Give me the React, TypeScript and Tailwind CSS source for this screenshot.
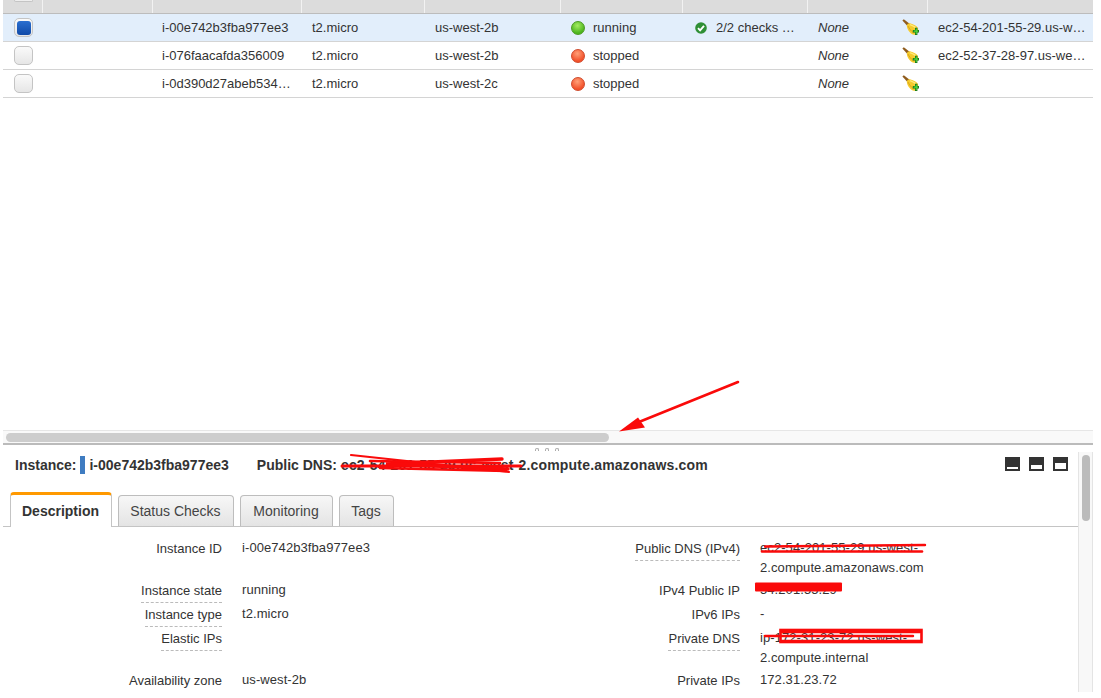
import React from "react";

const columns = ["w-[40px]", "w-[110px]", "w-[149px]", "w-[123px]", "w-[136px]", "w-[122px]", "w-[125px]", "w-[120px]", "flex-1"];

function Checkbox({ on }: { on?: boolean }) {
  return (
    <div className="flex h-[19px] w-[19px] items-center justify-center rounded-[5px] border border-[#c4c4c4] bg-gradient-to-b from-[#fafafa] to-[#e6e6e6]">
      {on && <div className="h-[14px] w-[14px] rounded-[3px] bg-gradient-to-b from-[#2a6fd0] to-[#104aa8]" />}
    </div>
  );
}

function Broom() {
  return (
    <svg width="17" height="18" viewBox="0 0 17 18" className="block">
      <path d="M0.4 1.6 L1.8 0.2 L7.6 4.8 L5.4 7 Z" fill="#8f5c1e" />
      <path d="M4.8 6.4 C5.4 4.6 7 3.8 8.6 4.4 C11.4 5.2 15 6.8 16 9 C16.6 11.4 15.6 14 13.6 15.4 C11.4 16.2 9.4 15.2 7.8 13.2 C6 11.2 4.8 8.8 4.8 6.4 Z" fill="#f6cb2c" />
      <path d="M6 7 C7.2 9.6 9 12 11.4 13.8" stroke="#d9a41c" strokeWidth="1" fill="none" />
      <path d="M8 5.6 C10 6.4 12 7.4 13.8 8.6" stroke="#ffe97a" strokeWidth="1.5" fill="none" />
      <path d="M10.8 11 H13 V8.8 H15.4 V11 H17 V13.4 H15.4 V16 H13 V13.4 H10.8 Z" fill="#146f18" />
      <path d="M13.7 9.6 H14.8 V11.6 H16.2 V12.8 H14.8 V15.2 H13.7 V12.8 H11.6 V11.6 H13.7 Z" fill="#52dc3e" />
    </svg>
  );
}

function StateDot({ running }: { running: boolean }) {
  return (
    <span
      className={
        running
          ? "h-[14px] w-[14px] rounded-full border border-[#4c9a22] bg-[radial-gradient(circle_at_45%_30%,#a4ec62,#4cb51e_70%)]"
          : "h-[14px] w-[14px] rounded-full border border-[#cf4a2c] bg-[radial-gradient(circle_at_45%_30%,#ffa078,#f2502a_70%)]"
      }
    />
  );
}

function CheckBadge() {
  return (
    <svg width="12" height="12" viewBox="0 0 12 12" className="block">
      <circle cx="6" cy="6" r="5.8" fill="#2f8f35" />
      <path d="M3 6.2 L5.1 8.3 L9 3.9" stroke="#fff" strokeWidth="1.9" fill="none" />
    </svg>
  );
}

type RowData = { id: string; zone: string; running: boolean; checks?: string; dns?: string; selected?: boolean };

const rows: RowData[] = [
  { id: "i-00e742b3fba977ee3", zone: "us-west-2b", running: true, checks: "2/2 checks …", dns: "ec2-54-201-55-29.us-w…", selected: true },
  { id: "i-076faacafda356009", zone: "us-west-2b", running: false, dns: "ec2-52-37-28-97.us-we…" },
  { id: "i-0d390d27abeb534…", zone: "us-west-2c", running: false },
];

function TableRow({ r }: { r: RowData }) {
  return (
    <div className={`flex h-[28px] items-center border-b border-[#d4d4d4] text-[13px] text-[#333] ${r.selected ? "bg-[#e2eefb]" : "bg-white"}`}>
      <div className={`${columns[0]} pl-[11px]`}><Checkbox on={r.selected} /></div>
      <div className={columns[1]} />
      <div className={`${columns[2]} pl-[9px]`}>{r.id}</div>
      <div className={`${columns[3]} pl-[10px]`}>t2.micro</div>
      <div className={`${columns[4]} pl-[10px]`}>{r.zone}</div>
      <div className={`${columns[5]} flex items-center gap-[8px] pl-[10px]`}>
        <StateDot running={r.running} />
        <span>{r.running ? "running" : "stopped"}</span>
      </div>
      <div className={`${columns[6]} flex items-center gap-[9px] pl-[12px]`}>
        {r.checks && <CheckBadge />}
        {r.checks && <span>{r.checks}</span>}
      </div>
      <div className={`${columns[7]} flex items-center pl-[10px]`}>
        <span className="w-[84px] italic">None</span>
        <Broom />
      </div>
      <div className={`${columns[8]} pl-[10px] whitespace-nowrap`}>{r.dns}</div>
    </div>
  );
}

function Label({ children, dashed }: { children: React.ReactNode; dashed?: boolean }) {
  return (
    <div className="flex w-[219px] justify-end">
      <span className={`leading-[20px] ${dashed ? "h-[22px] border-b border-dashed border-[#bbb]" : ""}`}>{children}</span>
    </div>
  );
}

function Field({ label, dashed, tall, children }: { label: string; dashed?: boolean; tall?: boolean; children?: React.ReactNode }) {
  return (
    <div className={`flex shrink-0 ${tall ? "h-[42px]" : "h-[24px]"}`}>
      <Label dashed={dashed}>{label}</Label>
      <div className="ml-[20px] -mt-px leading-[20px] tracking-[0.08px]">{children}</div>
    </div>
  );
}

function LayoutIcon({ kind }: { kind: "bottom" | "middle" | "full" }) {
  const inner =
    kind === "bottom"
      ? "mt-[10px] h-[2px] w-[11px]"
      : kind === "middle"
        ? "mt-[8px] h-[4px] w-[11px]"
        : "mt-[6px] h-[6px] w-[11px]";
  return (
    <div className="flex h-[14px] w-[15px] justify-center bg-[#333]">
      <div className={`${inner} bg-white`} />
    </div>
  );
}

function Tab({ children, w }: { children: React.ReactNode; w: string }) {
  return (
    <div className={`${w} flex h-[31px] items-center justify-center rounded-t-[4px] border border-b-0 border-[#bdbdbd] bg-gradient-to-b from-[#f7f7f7] to-[#e4e4e4] text-[14px] text-[#444]`}>
      {children}
    </div>
  );
}

export default function App() {
  return (
    <div className="relative h-[698px] w-[1101px] overflow-hidden bg-white font-['Liberation_Sans',Arial,sans-serif] text-[13px] text-[#333]">
      <div className="flex h-[692px] w-[1093px] flex-col">
        <div className="pl-[3px]">
          {/* header remnant */}
          <div className="flex h-[14px] border-b border-[#bcbcbc] bg-[#dcdcdc]">
            <div className="relative w-[40px] border-r border-[#f2f2f2]">
              <div className="absolute left-[11px] top-0 h-[2px] w-[19px] rounded-b-[3px] border border-t-0 border-[#c4c4c4] bg-[#eee]" />
            </div>
            <div className="w-[110px] border-r border-[#f2f2f2]" />
            <div className="w-[149px] border-r border-[#f2f2f2]" />
            <div className="w-[123px] border-r border-[#f2f2f2]" />
            <div className="w-[136px] border-r border-[#f2f2f2]" />
            <div className="w-[122px] border-r border-[#f2f2f2]" />
            <div className="w-[125px] border-r border-[#f2f2f2]" />
            <div className="w-[120px] border-r border-[#f2f2f2]" />
          </div>
          {rows.map((r) => (
            <TableRow key={r.id} r={r} />
          ))}
        </div>

        <div className="flex-1" />

        {/* horizontal scrollbar */}
        <div className="ml-[3px] h-[15px] border-t border-b-2 border-t-[#e6e6e6] border-b-[#bbb] bg-[#f9f9f9] pl-[3px] pt-[2px]">
          <div className="h-[9px] w-[603px] rounded-full bg-[#cdcdcd]" />
        </div>

        {/* detail pane */}
        <div className="ml-[3px] flex h-[247px] flex-col overflow-hidden">
          <div className="flex h-[7px] justify-center gap-[6px] pr-[2px] pt-[3px]">
            <span className="h-[3px] w-[4px] rounded-t-full border border-b-0 border-[#aaa]" />
            <span className="h-[3px] w-[4px] rounded-t-full border border-b-0 border-[#aaa]" />
            <span className="h-[3px] w-[4px] rounded-t-full border border-b-0 border-[#aaa]" />
          </div>
          <div className="flex min-h-0 flex-1">
            <div className="flex w-[1075px] flex-col">
              {/* heading */}
              <div className="flex h-[40px] shrink-0 items-start pl-[12px] pr-[10px] pt-[4px]">
                <div className="flex h-[18px] items-center text-[14px] font-bold leading-[18px] text-[#333]">
                  <span>Instance:</span>
                  <span className="ml-[4px] h-[18px] w-[5px] bg-[#3f7cc1]" />
                  <span className="ml-[4px]">i-00e742b3fba977ee3</span>
                  <span className="ml-[28px]">Public DNS:</span>
                  <span className="ml-[4px] tracking-[0.19px]">ec2-54-201-55-29.us-west-2.compute.amazonaws.com</span>
                </div>
                <div className="ml-auto mt-[1px] flex gap-[9px]">
                  <LayoutIcon kind="bottom" />
                  <LayoutIcon kind="middle" />
                  <LayoutIcon kind="full" />
                </div>
              </div>
              {/* tabs */}
              <div className="flex h-[35px] shrink-0 items-end gap-[6px] border-b border-[#c4c4c4] pl-[6.5px]">
                <div className="-mb-px flex h-[35px] w-[102px] items-center justify-center rounded-t-[4px] border border-b-0 border-t-[3px] border-[#c4c4c4] border-t-[#f90] bg-white text-[14px] font-bold text-[#333]">
                  Description
                </div>
                <Tab w="w-[116px]">Status Checks</Tab>
                <Tab w="w-[93px]">Monitoring</Tab>
                <Tab w="w-[55px]">Tags</Tab>
              </div>
              {/* fields */}
              <div className="flex pt-[12px]">
                <div className="flex w-[518px] flex-col">
                  <Field label="Instance ID" tall>i-00e742b3fba977ee3</Field>
                  <Field label="Instance state" dashed>running</Field>
                  <Field label="Instance type" dashed>t2.micro</Field>
                  <Field label="Elastic IPs" dashed tall />
                  <Field label="Availability zone" dashed>us-west-2b</Field>
                </div>
                <div className="flex flex-1 flex-col">
                  <Field label="Public DNS (IPv4)" dashed tall>
                    ec2-54-201-55-29.us-west-
                    <br />
                    2.compute.amazonaws.com
                  </Field>
                  <Field label="IPv4 Public IP">54.201.55.29</Field>
                  <Field label="IPv6 IPs">-</Field>
                  <Field label="Private DNS" dashed tall>
                    ip-172-31-23-72.us-west-
                    <br />
                    2.compute.internal
                  </Field>
                  <Field label="Private IPs" dashed>172.31.23.72</Field>
                </div>
              </div>
            </div>
            {/* vertical scrollbar */}
            <div className="flex-1 border-x border-[#e4e4e4] bg-[#f8f8f8] pl-[3px] pt-[3px]">
              <div className="h-[66px] w-[8px] rounded-full bg-[#bbb]" />
            </div>
          </div>
        </div>
      </div>

      {/* hand-drawn red annotations lying over the screenshot */}
      <svg className="pointer-events-none absolute inset-0" width="1101" height="698" viewBox="0 0 1101 698">
        <g stroke="#fa0a0a" fill="none" strokeLinecap="round">
          <path d="M738 382 L634 424" strokeWidth="2.6" />
          <path d="M351 455 L509 472" strokeWidth="2.2" />
          <path d="M342 466 L521 466" strokeWidth="3" />
          <path d="M502 459 L386 464 L508 469" strokeWidth="3.4" />
          <path d="M370 461 L500 463 M380 468 L506 471" strokeWidth="2.6" />
          <path d="M765 546.5 L925 545" strokeWidth="2.4" />
          <path d="M762 551.5 L922 551.5" strokeWidth="2.6" />
          <path d="M765 636 L913 636" strokeWidth="2.4" />
          <path d="M782 632 L920 632 M782 641 L920 641" strokeWidth="2.6" />
          <rect x="780.5" y="630" width="141" height="12" strokeWidth="2.6" />
        </g>
        <path d="M619 431.5 L638 417.5 L645 427.5 Z" fill="#fa0a0a" />
        <rect x="755" y="582.5" width="87" height="9" rx="1" fill="#fa0a0a" />
      </svg>
    </div>
  );
}
